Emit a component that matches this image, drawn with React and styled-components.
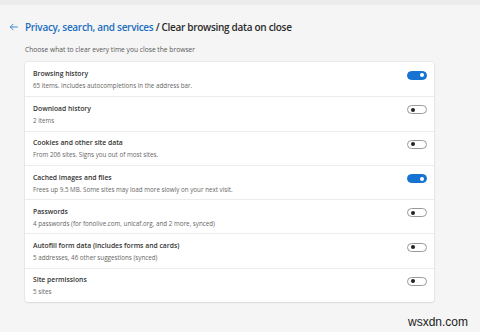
import React from "react"
import styled, { createGlobalStyle } from "styled-components"

const GlobalStyle = createGlobalStyle`
  html, body {
    margin: 0;
    padding: 0;
    background: #f5f5f5;
    font-family: "Open Sans", "Liberation Sans", sans-serif;
    width: 480px;
    height: 332px;
    overflow: hidden;
  }
`

const Page = styled.div`
  position: relative;
  width: 480px;
  height: 332px;
  background: #f5f5f5;
`

const TopEdge = styled.div`
  height: 3px;
  background: #ececec;
  box-shadow: 0 1px 3px rgba(0, 0, 0, 0.08);
`

const Content = styled.div`
  padding: 16px 0 0 25px;
  width: 409px;
`

const Header = styled.div`
  display: flex;
  align-items: center;
  gap: 6px;
  margin-left: -16px;
  height: 16px;
`

const Back = styled.svg`
  width: 10px;
  height: 10px;
  color: #1a6fc4;
`

const Title = styled.h1`
  margin: 0;
  font-size: 10px;
  font-weight: 600;
  color: #2b2b2b;
  white-space: nowrap;
  letter-spacing: -0.3px;

  span {
    color: #1b6ec2;
  }
`

const Lead = styled.p`
  margin: 10px 0 0 0;
  font-size: 6.7px;
  color: #555;
  line-height: 10px;
`

const Card = styled.div`
  margin-top: 7px;
  background: #fff;
  border-radius: 3px;
  box-shadow: 0 0 0 1px rgba(0, 0, 0, 0.04), 0 1px 2px rgba(0, 0, 0, 0.08);
`

const Row = styled.div`
  display: flex;
  align-items: center;
  justify-content: space-between;
  height: 34.3px;
  padding: 0 7px 0 8px;
  box-sizing: border-box;
  border-top: ${p => (p.first ? "none" : "1px solid #ececec")};
`

const Text = styled.div`
  display: flex;
  flex-direction: column;
  gap: 2px;
  margin-top: 1px;
`

const Name = styled.div`
  font-size: 6.8px;
  font-weight: 600;
  color: #333;
  line-height: 10px;
`

const Desc = styled.div`
  font-size: 6.25px;
  color: #666;
  line-height: 9px;
`

const Switch = styled.div`
  position: relative;
  width: 20px;
  height: 9px;
  border-radius: 5px;
  box-sizing: border-box;
  margin-top: -8px;
  background: ${p => (p.on ? "#1773d1" : "#fff")};
  border: 1px solid ${p => (p.on ? "#1773d1" : "#999")};

  &::after {
    content: "";
    position: absolute;
    top: 1.5px;
    left: ${p => (p.on ? "12px" : "2.5px")};
    width: 4px;
    height: 4px;
    border-radius: 50%;
    background: ${p => (p.on ? "#fff" : "#222")};
  }
`

const Watermark = styled.div`
  position: absolute;
  right: 12px;
  bottom: 3px;
  font-family: "Liberation Sans", Arial, sans-serif;
  font-size: 12px;
  color: #222;
`

const items = [
  { name: "Browsing history", desc: "65 items. Includes autocompletions in the address bar.", on: true },
  { name: "Download history", desc: "2 items", on: false },
  { name: "Cookies and other site data", desc: "From 206 sites. Signs you out of most sites.", on: false },
  { name: "Cached images and files", desc: "Frees up 9.5 MB. Some sites may load more slowly on your next visit.", on: true },
  { name: "Passwords", desc: "4 passwords (for fonolive.com, unicaf.org, and 2 more, synced)", on: false },
  { name: "Autofill form data (includes forms and cards)", desc: "5 addresses, 46 other suggestions (synced)", on: false },
  { name: "Site permissions", desc: "5 sites", on: false },
]

const App = () => (
  <Page>
    <GlobalStyle />
    <TopEdge />
    <Content>
      <Header>
        <Back viewBox="0 0 16 16" fill="none" stroke="currentColor" strokeWidth="1.3">
          <path d="M14 8H2M7 3L2 8l5 5" />
        </Back>
        <Title>
          <span>Privacy, search, and services</span> / Clear browsing data on close
        </Title>
      </Header>
      <Lead>Choose what to clear every time you close the browser</Lead>
      <Card>
        {items.map((it, i) => (
          <Row key={it.name} first={i === 0}>
            <Text>
              <Name>{it.name}</Name>
              <Desc>{it.desc}</Desc>
            </Text>
            <Switch on={it.on} />
          </Row>
        ))}
      </Card>
    </Content>
    <Watermark>wsxdn.com</Watermark>
  </Page>
)

export default App
